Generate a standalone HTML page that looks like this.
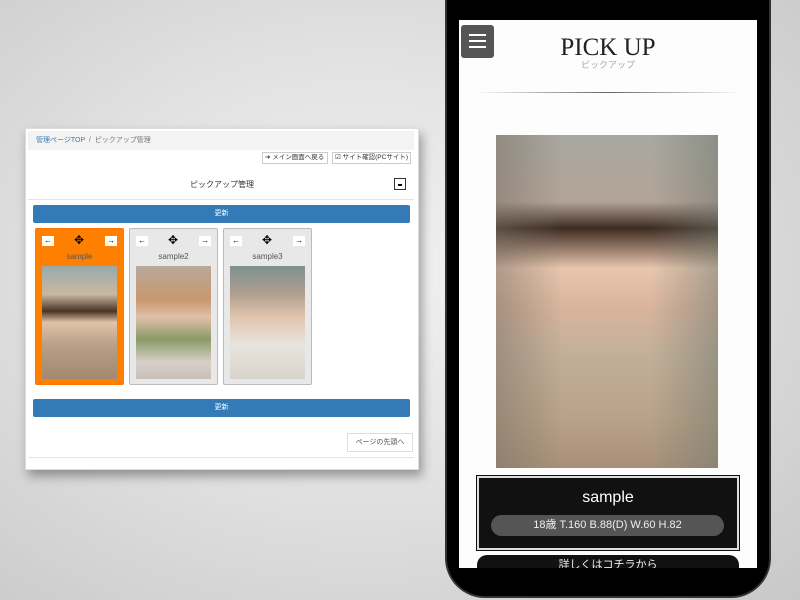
<!DOCTYPE html>
<html style="overflow:hidden;width:800px;height:600px"><head><meta charset="utf-8"><style>
*{box-sizing:border-box;margin:0;padding:0}
body{width:800px;height:600px;overflow:hidden;position:relative;font-family:"Liberation Sans","Noto Sans CJK JP",sans-serif;background:radial-gradient(ellipse at 45% 45%,#f2f2f2 0%,#e2e2e2 45%,#c8c8c8 100%)}
.panel{position:absolute;left:25px;top:128px;width:394px;height:342px;background:#fff;box-shadow:3px 6px 10px rgba(0,0,0,.35);border:1px solid #ddd}
.bc{position:absolute;left:2px;top:2px;right:4px;height:19px;background:#f3f3f3;font-size:7px;line-height:19px;padding-left:8px;color:#777}
.bc span{color:#337ab7}
.tb{position:absolute;top:23px;height:12px;border:1px solid #ccc;font-size:6.5px;line-height:10px;padding:0 2px;color:#333;background:#fff;white-space:nowrap;overflow:hidden}
.h{position:absolute;left:0;right:0;top:50px;text-align:center;font-size:8px;color:#333}
.min{position:absolute;left:368px;top:49px;width:12px;height:12px;border:1px solid #333;background:#fff}
.min:after{content:"";position:absolute;left:3px;top:5px;width:4px;height:1.5px;background:#000}
.hr{position:absolute;left:2px;right:4px;top:70px;border-top:1px solid #e5e5e5}
.btn{position:absolute;left:7px;width:377px;height:18px;background:#337ab7;border-radius:2px;color:#fff;font-size:7px;text-align:center;line-height:18px}
.card{position:absolute;top:99px;width:89px;height:157px;background:#e8e8e8;border:1px solid #bbb;border-radius:2px}
.card.o{background:#ff8000;border-color:#f70}
.ar{position:absolute;top:7px;width:12px;height:10px;background:#fff;font-size:8px;line-height:10px;text-align:center;color:#000}
.mv{position:absolute;top:4px;left:38px;font-size:12px;color:#000}
.nm{position:absolute;top:23px;left:0;right:0;text-align:center;font-size:8px;color:#555}
.ph{position:absolute;left:6px;top:37px;width:75px;height:113px}
.top{position:absolute;right:5px;top:304px;width:66px;height:19px;border:1px solid #ddd;font-size:7px;line-height:17px;text-align:center;color:#555;background:#fff}
.bot{position:absolute;left:2px;right:4px;top:328px;border-top:1px solid #e5e5e5}
.phone{position:absolute;left:445px;top:-40px;width:326px;height:638px;background:#000;border-radius:40px;border:2px solid #333}
.scr{position:absolute;left:459px;top:20px;width:298px;height:548px;background:#fdfdfd;overflow:hidden}
</style></head><body>
<div class="panel">
<div class="bc"><span>管理ページTOP</span> &nbsp;/&nbsp; ピックアップ管理</div>
<div class="tb" style="left:236px;width:66px">➜ メイン画面へ戻る</div>
<div class="tb" style="left:306px;width:79px">☑ サイト確認(PCサイト)</div>
<div class="h">ピックアップ管理</div>
<div class="min"></div>
<div class="hr"></div>
<div class="btn" style="top:76px">更新</div>
<div class="card o" style="left:9px"><div class="ar" style="left:6px">←</div><div class="mv">✥</div><div class="ar" style="left:69px">→</div><div class="nm">sample</div><div class="ph" style="background:linear-gradient(180deg,#9aa 0%,#c9b8a0 25%,#4a3426 40%,#e2c2aa 50%,#b89f86 70%,#a08a70 100%)"></div></div>
<div class="card" style="left:103px"><div class="ar" style="left:6px">←</div><div class="mv">✥</div><div class="ar" style="left:69px">→</div><div class="nm">sample2</div><div class="ph" style="background:linear-gradient(180deg,#b8a89a 0%,#c89870 30%,#e0c0a8 45%,#8a9a68 65%,#d8d0c8 85%,#c8c0b8 100%)"></div></div>
<div class="card" style="left:197px"><div class="ar" style="left:6px">←</div><div class="mv">✥</div><div class="ar" style="left:69px">→</div><div class="nm">sample3</div><div class="ph" style="background:linear-gradient(180deg,#7c9090 0%,#b0a090 25%,#e0c4ac 45%,#e8e4de 70%,#d8d4cc 100%)"></div></div>
<div class="btn" style="top:270px">更新</div>
<div class="top">ページの先頭へ</div>
<div class="bot"></div>
</div>
<div class="phone"></div>
<div class="scr">
<div style="position:absolute;left:2px;top:5px;width:33px;height:33px;background:#555;border-radius:3px"><div style="position:absolute;left:8px;top:9px;width:17px;height:2px;background:#fff;box-shadow:0 6px #fff,0 12px #fff"></div></div>
<div style="position:absolute;left:0;right:0;top:14px;text-align:center;font-family:'Liberation Serif',serif;font-size:25px;color:#222">PICK UP</div>
<div style="position:absolute;left:0;right:0;top:38px;text-align:center;font-size:9px;color:#aaa">ピックアップ</div>
<div style="position:absolute;left:15px;right:15px;top:72px;height:1px;background:linear-gradient(90deg,transparent,#666,transparent)"></div>
<div style="position:absolute;left:37px;top:115px;width:222px;height:333px;background:linear-gradient(90deg,rgba(120,110,100,.5),transparent 30%,transparent 70%,rgba(110,120,110,.5)),linear-gradient(180deg,#a8a8a0 0%,#b4a498 20%,#3e2c22 28%,#e8c6ae 40%,#d8b49c 52%,#c4b09a 65%,#b8a288 85%,#a89078 100%)"></div>
<div style="position:absolute;left:18px;top:456px;width:262px;height:74px;background:#111;border:2px solid #ddd;outline:1px solid #111"></div>
<div style="position:absolute;left:0;right:0;top:469px;text-align:center;color:#fff;font-size:16px">sample</div>
<div style="position:absolute;left:32px;top:495px;width:233px;height:21px;background:#555;border-radius:11px;color:#eee;font-size:11px;text-align:center;line-height:21px">18歳 T.160 B.88(D) W.60 H.82</div>
<div style="position:absolute;left:18px;top:535px;width:262px;height:30px;background:#111;border-radius:10px;color:#eee;font-size:11px;text-align:center;line-height:20px">詳しくはコチラから</div>
</div>
</body></html>
